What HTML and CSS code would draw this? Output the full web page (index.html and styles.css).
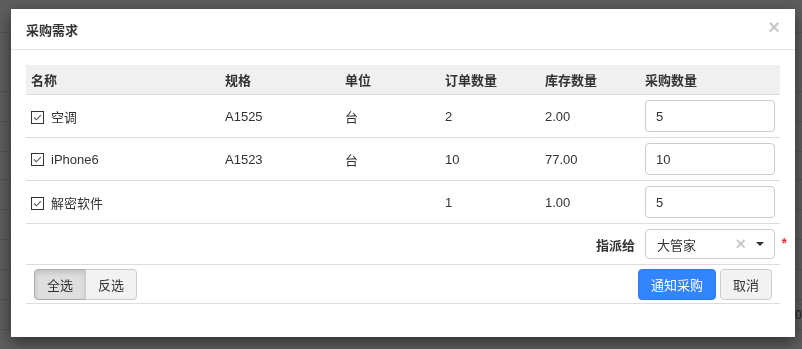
FILE: index.html
```
<!DOCTYPE html>
<html lang="zh-CN">
<head>
    <meta charset="UTF-8">
    <meta name="viewport" content="width=device-width, initial-scale=1.0">
    <title>采购需求</title>
    <link rel="stylesheet" href="styles.css">
</head>
<body>
    <!-- page behind the overlay -->
    <div class="backdrop">
        <div class="bg-row h32"></div>
        <div class="bg-row h59"></div>
        <div class="bg-row h30"></div>
        <div class="bg-row h30"></div>
        <div class="bg-row h28"></div>
        <div class="bg-row h30"></div>
        <div class="bg-row h30"></div>
        <div class="bg-row h30"></div>
        <div class="bg-row h30"></div>
        <div class="bg-row h30 bg-text">0</div>
    </div>

    <div class="modal">
        <div class="modal-header">
            <h4 class="modal-title">采购需求</h4>
            <span class="close">&times;</span>
        </div>
        <div class="modal-body">
            <table class="purchase-table">
                <colgroup>
                    <col style="width: 194px">
                    <col style="width: 120px">
                    <col style="width: 100px">
                    <col style="width: 100px">
                    <col style="width: 100px">
                    <col style="width: 140px">
                </colgroup>
                <thead>
                    <tr>
                        <th>名称</th>
                        <th>规格</th>
                        <th>单位</th>
                        <th>订单数量</th>
                        <th>库存数量</th>
                        <th>采购数量</th>
                    </tr>
                </thead>
                <tbody>
                    <tr class="item-row">
                        <td><span class="check"><svg viewBox="0 0 13 13"><path d="M2.5 6.5 L5.2 9.2 L10.5 3.8"/></svg></span>空调</td>
                        <td>A1525</td>
                        <td>台</td>
                        <td>2</td>
                        <td>2.00</td>
                        <td class="qty"><input type="text" value="5"></td>
                    </tr>
                    <tr class="item-row">
                        <td><span class="check"><svg viewBox="0 0 13 13"><path d="M2.5 6.5 L5.2 9.2 L10.5 3.8"/></svg></span>iPhone6</td>
                        <td>A1523</td>
                        <td>台</td>
                        <td>10</td>
                        <td>77.00</td>
                        <td class="qty"><input type="text" value="10"></td>
                    </tr>
                    <tr class="item-row">
                        <td><span class="check"><svg viewBox="0 0 13 13"><path d="M2.5 6.5 L5.2 9.2 L10.5 3.8"/></svg></span>解密软件</td>
                        <td></td>
                        <td></td>
                        <td>1</td>
                        <td>1.00</td>
                        <td class="qty"><input type="text" value="5"></td>
                    </tr>
                    <tr class="assign-row">
                        <td colspan="5" class="assign-label">指派给</td>
                        <td class="assign-cell">
                            <div class="select-box">
                                <span class="select-value">大管家</span>
                                <span class="select-clear">&times;</span>
                                <span class="select-caret"></span>
                            </div>
                            <span class="required">*</span>
                        </td>
                    </tr>
                    <tr class="action-row">
                        <td colspan="6">
                            <div class="actions">
                                <div class="btn-group">
                                    <button class="btn btn-default active">全选</button>
                                    <button class="btn btn-default">反选</button>
                                </div>
                                <div class="btn-right">
                                    <button class="btn btn-primary">通知采购</button>
                                    <button class="btn btn-default">取消</button>
                                </div>
                            </div>
                        </td>
                    </tr>
                </tbody>
            </table>
        </div>
    </div>
</body>
</html>
```

FILE: styles.css
```
/* Page and overlay */
body {
    margin: 0;
    padding: 0;
    background-color: #5e5e5e;
    font-family: 'Liberation Sans', 'Noto Sans CJK SC', sans-serif;
    font-size: 13px;
    color: #333;
    overflow: hidden;
}

.backdrop {
    width: 802px;
    height: 349px;
    overflow: hidden;
}

.bg-row {
    border-bottom: 1px solid #545454;
    box-sizing: border-box;
}

.h28 { height: 28px; }
.h30 { height: 30px; }
.h32 { height: 33px; }
.h59 { height: 59px; }

.bg-text {
    padding-left: 795px;
    line-height: 30px;
    font-size: 12px;
    color: #1e1e1e;
    white-space: nowrap;
}

/* Modal */
.modal {
    position: fixed;
    left: 11px;
    top: 9px;
    width: 784px;
    height: 328px;
    background-color: #fff;
    box-shadow: 0 5px 15px rgba(0, 0, 0, 0.5);
}

.modal-header {
    display: flex;
    justify-content: space-between;
    align-items: center;
    height: 40px;
    padding: 0 15px;
    border-bottom: 1px solid #e5e5e5;
}

.modal-title {
    margin: 0;
    font-size: 13px;
    font-weight: bold;
    color: #333;
}

.close {
    font-size: 20px;
    font-weight: bold;
    color: #c9c9c9;
    line-height: 1;
    margin-right: 0;
    margin-top: -4px;
}

.modal-body {
    padding: 15px;
}

/* Table */
.purchase-table {
    width: 754px;
    border-collapse: collapse;
    table-layout: fixed;
}

.purchase-table th {
    height: 29px;
    padding: 0 5px;
    text-align: left;
    font-weight: bold;
    background-color: #f0f0f0;
    border-bottom: 1px solid #ddd;
}

.purchase-table td {
    padding: 0 5px;
    border-bottom: 1px solid #ddd;
}

.item-row td {
    height: 42px;
}

.check {
    display: inline-block;
    width: 13px;
    height: 13px;
    border: 1px solid #333;
    box-sizing: border-box;
    vertical-align: -2px;
    margin-right: 7px;
}

.check svg {
    display: block;
    width: 11px;
    height: 11px;
}

.check path {
    fill: none;
    stroke: #555;
    stroke-width: 1.3;
}

.qty input {
    display: block;
    width: 130px;
    height: 32px;
    box-sizing: border-box;
    padding: 0 10px;
    border: 1px solid #ccc;
    border-radius: 4px;
    font-family: 'Liberation Sans', 'Noto Sans CJK SC', sans-serif;
    font-size: 13px;
    color: #333;
}

/* Assign row */
.assign-row td {
    height: 40px;
}

.assign-label {
    text-align: right;
    font-weight: bold;
}

.assign-cell {
    position: relative;
}

.select-box {
    display: flex;
    align-items: center;
    width: 130px;
    height: 30px;
    box-sizing: border-box;
    padding: 0 10px 0 11px;
    border: 1px solid #ccc;
    border-radius: 4px;
}

.select-value {
    flex: 1;
}

.select-clear {
    font-size: 18px;
    font-weight: bold;
    color: #ccc;
    line-height: 1;
    margin-right: 10px;
}

.select-caret {
    width: 0;
    height: 0;
    border-left: 4px solid transparent;
    border-right: 4px solid transparent;
    border-top: 4px solid #333;
}

.required {
    position: absolute;
    right: -7px;
    top: 11px;
    color: #e4393c;
    font-weight: bold;
    font-size: 14px;
}

/* Buttons */
.action-row td {
    height: 38px;
    padding: 0 8px;
}

.actions {
    display: flex;
    justify-content: space-between;
    align-items: center;
}

.btn {
    height: 31px;
    padding: 0 12px;
    font-family: 'Liberation Sans', 'Noto Sans CJK SC', sans-serif;
    font-size: 13px;
    border: 1px solid #ccc;
    border-radius: 4px;
    cursor: pointer;
}

.btn-default {
    background-color: #f2f2f2;
    color: #333;
}

.btn-default.active {
    background-color: #dedede;
    border-color: #adadad;
    box-shadow: inset 0 3px 5px rgba(0, 0, 0, 0.125);
}

.btn-group {
    display: flex;
}

.btn-group .btn:first-child {
    border-top-right-radius: 0;
    border-bottom-right-radius: 0;
}

.btn-group .btn:last-child {
    margin-left: -1px;
    border-top-left-radius: 0;
    border-bottom-left-radius: 0;
}

.btn-right {
    display: flex;
    gap: 4px;
}

.btn-primary {
    background-color: #3385ff;
    border-color: #2e7ae8;
    color: #fff;
    padding: 0 12px;
}
```
